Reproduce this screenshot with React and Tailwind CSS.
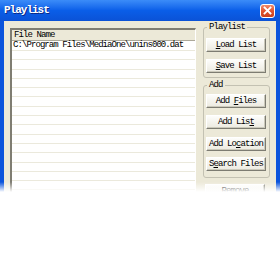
import React from 'react';

const mono = "font-['Liberation_Mono',monospace]";

function Btn({ children, className = '' }) {
    return (
        <div
            className={`ml-[2px] w-[60px] h-[14px] flex items-center justify-center bg-gradient-to-b from-[#fdfdfb] to-[#eceae0] border border-t-white border-l-white border-r-[#7d7c72] border-b-[#7d7c72] shadow-[inset_-1px_-1px_0_#cbc9bb] text-[9px] leading-none tracking-[-0.9px] text-black ${className}`}
        >
            <span className="whitespace-pre">{children}</span>
        </div>
    );
}

function Group({ label, className = '', children }) {
    return (
        <fieldset className={`border border-[#c3c1b2] rounded-[3px] ${className}`}>
            <legend className="ml-[3px] px-[2px] text-[9px] leading-[10px] tracking-[-0.9px] text-black">
                {label}
            </legend>
            {children}
        </fieldset>
    );
}

function CloseButton() {
    return (
        <div className="w-[15px] h-[14px] mr-[5px] rounded-[3px] border border-white bg-gradient-to-b from-[#ef8a6c] via-[#e0532f] to-[#c9401c] flex items-center justify-center">
            <svg width="9" height="9" viewBox="0 0 9 9">
                <path d="M1.5 1.5 L7.5 7.5 M7.5 1.5 L1.5 7.5" stroke="white" strokeWidth="1.8" strokeLinecap="square" />
            </svg>
        </div>
    );
}

export default function App() {
    const rows = Array.from({ length: 16 });

    return (
        <div className={`relative w-[280px] h-[270px] overflow-hidden bg-white ${mono}`}>
            <div className="flex flex-col h-full">
                {/* title bar */}
                <div className="h-[21px] flex items-center justify-between bg-gradient-to-b from-[#3b8cf8] via-[#0a5ee8] to-[#0b52d6]">
                    <span className="ml-[4px] text-white font-bold text-[11px] tracking-[-1px] [text-shadow:1px_1px_0_#0a2a8a]">
                        Playlist
                    </span>
                    <CloseButton />
                </div>

                <div className="flex-1 flex bg-[#ece9d8] border-l-4 border-r-4 border-[#0b54dc]">
                    {/* list */}
                    <div className="ml-[6px] mt-[7px] w-[186px] flex flex-col bg-white border-t-2 border-l-2 border-t-[#7f7d72] border-l-[#7f7d72] border-r border-r-white">
                        <div className="h-[11px] flex items-center bg-[#ece9d8] border-b border-[#aca899] pl-[2px] text-[9px] leading-none tracking-[-0.9px] text-black">
                            File Name
                        </div>
                        {rows.map((_, i) => (
                            <div
                                key={i}
                                className={`${i === 0 ? 'h-[10px]' : 'h-[9.3px]'} shrink-0 border-b border-[#ebe9dc] pl-[1px] flex items-center text-[9px] leading-none tracking-[-0.92px] text-black`}
                            >
                                {i === 0 ? 'C:\\Program Files\\MediaOne\\unins000.dat' : ''}
                            </div>
                        ))}
                    </div>

                    {/* buttons */}
                    <div className="ml-[7px] mt-[1px] w-[67px] flex flex-col">
                        <Group label="Playlist" className="pt-[6px] pb-[4px]">
                            <Btn><span className="underline">L</span>oad List</Btn>
                            <Btn className="mt-[7px]"><span className="underline">S</span>ave List</Btn>
                        </Group>
                        <Group label="Add" className="mt-[2px] pt-[4px] pb-[6px]">
                            <Btn>Add <span className="underline">F</span>iles</Btn>
                            <Btn className="mt-[7px]">Add Lis<span className="underline">t</span></Btn>
                            <Btn className="mt-[8px]">Add Lo<span className="underline">c</span>ation</Btn>
                            <Btn className="mt-[6px]">S<span className="underline">e</span>arch Files</Btn>
                        </Group>
                        <Btn className="mt-[6px]">Remove</Btn>
                    </div>
                </div>
            </div>

            {/* fade to white at bottom */}
            <div className="absolute left-0 right-0 top-[182px] bottom-0 flex flex-col">
                <div className="h-[10px] bg-gradient-to-b from-white/0 to-white" />
                <div className="flex-1 bg-white" />
            </div>
        </div>
    );
}
